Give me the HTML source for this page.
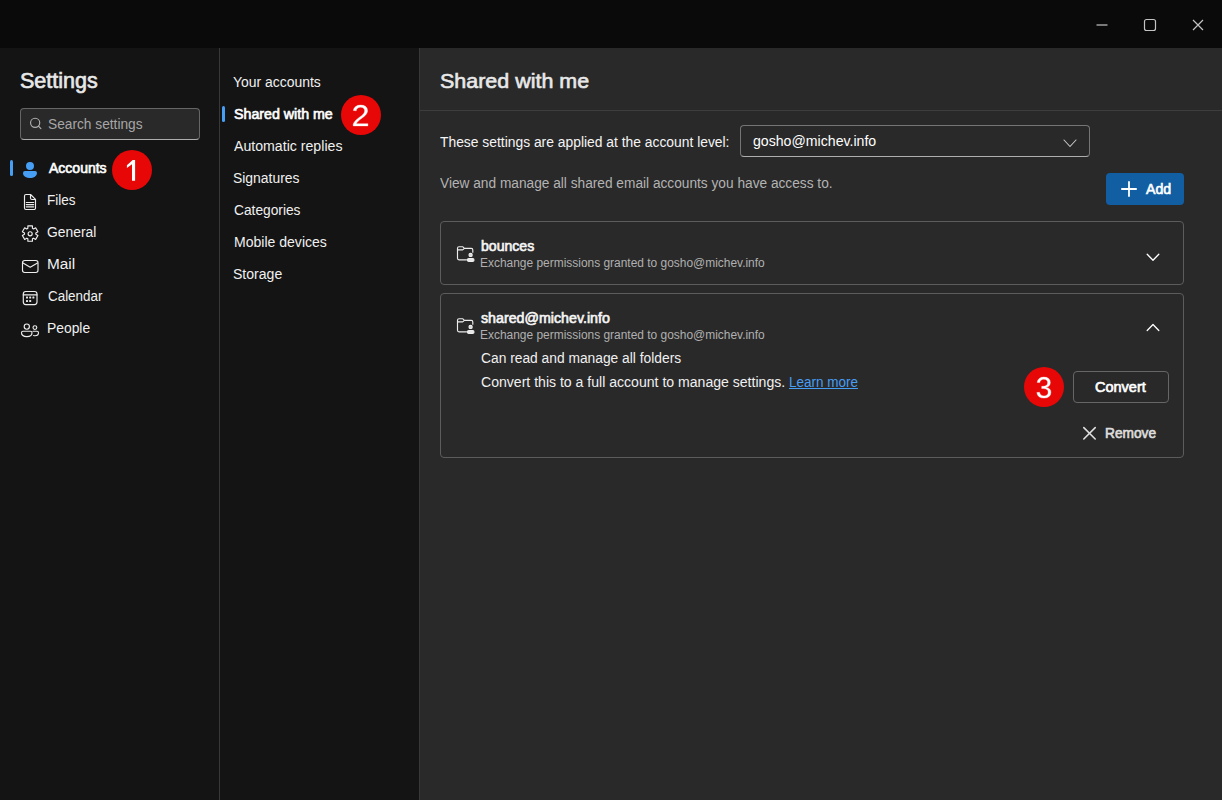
<!DOCTYPE html>
<html lang="en"><head><meta charset="utf-8"><title>Settings - Shared with me</title>
<style>
*{box-sizing:border-box;margin:0;padding:0}
html,body{width:1222px;height:800px;overflow:hidden;background:#0a0a0a;font-family:"Liberation Sans",sans-serif;color:#fff;font-size:14px}
.abs{position:absolute}
#titlebar{left:0;top:0;width:1222px;height:48px;background:#0a0a0a}
#left{left:0;top:48px;width:219px;height:752px;background:#141414}
#mid{left:220px;top:48px;width:199px;height:752px;background:#141414}
#sep1{left:219px;top:48px;width:1px;height:752px;background:#383838}
#sep2{left:419px;top:48px;width:1px;height:752px;background:#383838}
#main{left:420px;top:48px;width:802px;height:752px;background:#292929}
.t{position:absolute;white-space:nowrap;transform-origin:0 0}
.b{-webkit-text-stroke:.045em currentColor}
.b2{-webkit-text-stroke:.03em currentColor}
.badge{position:absolute;width:40px;height:40px;border-radius:50%;background:#e80707;color:transparent;font-size:1px;line-height:1px;overflow:hidden}
.dg{position:absolute;color:#fff;font-size:28px;line-height:28px;white-space:nowrap}
svg{position:absolute;overflow:visible}
.ic{fill:none;stroke:#ededed;stroke-width:1.150;stroke-linecap:round;stroke-linejoin:round}
</style></head><body>
<div class="abs" id="titlebar"></div>
<svg style="left:1090px;top:14px" width="120" height="22" viewBox="0 0 120 22" fill="none" stroke="#c4c4c4" stroke-width="1.200">
<path d="M6.500 11h11"/>
<rect x="54.500" y="5.500" width="11" height="11" rx="2"/>
<path d="M103 6l10 10M113 6l-10 10"/>
</svg>
<div class="abs" id="left"></div>
<div class="abs" id="mid"></div>
<div class="abs" id="sep1"></div>
<div class="abs" id="sep2"></div>
<div class="abs" id="main"></div>

<!-- search -->
<div class="abs" style="left:20px;top:108px;width:180px;height:32px;background:#292929;border:1px solid #666;border-bottom-color:#adadad;border-radius:4px"></div>
<svg style="left:28px;top:116px" width="16" height="16" viewBox="0 0 16 16" fill="none" stroke="#b0b0b0" stroke-width="1.150" stroke-linecap="round"><circle cx="7.150" cy="6.800" r="4.600"/><path d="M10.500 10.100L12.900 12.600"/></svg>

<!-- nav indicator + icons -->
<div class="abs" style="left:10px;top:160px;width:3px;height:16px;border-radius:1.500px;background:#479ef5"></div>
<svg style="left:20px;top:160px" width="20" height="20" viewBox="0 0 20 20"><path fill="#479ef5" d="M10 2a4 4 0 1 0 0 8 4 4 0 0 0 0-8ZM5.010 11A2 2 0 0 0 3 13c0 1.690.830 2.970 2.130 3.800A9.140 9.140 0 0 0 10 18c1.850 0 3.580-.39 4.870-1.200A4.350 4.350 0 0 0 17 13a2 2 0 0 0-2-2H5Z"/></svg>
<svg class="ic" style="left:20px;top:192px" width="20" height="20" viewBox="0 0 20 20"><path d="M6 2.500h4.600L15.500 7.400V16a1.500 1.500 0 0 1-1.500 1.500H6A1.500 1.500 0 0 1 4.500 16V4A1.500 1.500 0 0 1 6 2.500ZM10.500 2.700V6a1.500 1.500 0 0 0 1.500 1.500h3.300M6.300 10.500h7.400M6.300 12.600h7.400M6.300 14.800h7.400"/></svg>
<svg class="ic" style="left:20px;top:224px" width="20" height="20" viewBox="0 0 20 20"><path d="M7.88 4.37 L7.86 1.93 L12.44 1.93 L12.42 4.37 L13.54 5.02 L15.65 3.79 L17.93 7.75 L15.81 8.95 L15.81 10.25 L17.93 11.45 L15.65 15.41 L13.54 14.18 L12.42 14.83 L12.44 17.27 L7.86 17.27 L7.88 14.83 L6.76 14.18 L4.65 15.41 L2.37 11.45 L4.49 10.25 L4.49 8.95 L2.37 7.75 L4.65 3.79 L6.76 5.02Z"/><circle cx="10.15" cy="9.799999999999999" r="2.050"/></svg>
<svg class="ic" style="left:20px;top:256px" width="20" height="20" viewBox="0 0 20 20"><rect x="2.500" y="4.500" width="15.500" height="12" rx="2.200"/><path d="M3 7l7.200 4.200L17.500 7"/></svg>
<svg class="ic" style="left:20px;top:288px" width="20" height="20" viewBox="0 0 20 20"><rect x="3.300" y="3.500" width="13.700" height="13.100" rx="2.500"/><path d="M3.300 6.900h13.700"/><g fill="#e6e6e6" stroke="none"><rect x="6" y="8.600" width="2" height="2" rx=".5"/><rect x="9.200" y="8.600" width="2" height="2" rx=".5"/><rect x="12.400" y="8.600" width="2" height="2" rx=".5"/><rect x="6" y="12" width="2" height="2" rx=".5"/><rect x="9.200" y="12" width="2" height="2" rx=".5"/></g></svg>
<svg class="ic" style="left:20px;top:320px" width="20" height="20" viewBox="0 0 20 20"><circle cx="6.800" cy="6.600" r="2.600"/><circle cx="14.900" cy="7.600" r="1.900"/><path d="M3 11.200h7.500a1.500 1.500 0 0 1 1.500 1.500c0 2.400-2 3.900-5.200 3.900S1.500 15.100 1.500 12.700a1.500 1.500 0 0 1 1.500-1.500ZM13 11.200h4a1.500 1.500 0 0 1 1.500 1.500c0 1.800-1.300 3-3.500 3-.5 0-1-.1-1.400-.2"/></svg>
<div class="badge" style="left:112px;top:150px">1</div>
<svg style="left:0;top:0" width="1" height="1"><path fill="#fff" d="M135.100 160.100V180.800H132.000V164.300L126.900 168.000V165.300L132.700 160.100Z"/></svg>

<!-- mid -->
<div class="abs" style="left:222px;top:106px;width:3px;height:16px;border-radius:1.500px;background:#479ef5"></div>
<div class="badge" style="left:341px;top:95px">2</div>
<svg style="left:0;top:0" width="1" height="1"><path fill="#fff" stroke="#fff" stroke-width=".35" d="M353.20 125.90V124.05Q354.00 122.35 355.16 121.05Q356.32 119.75 357.60 118.69Q358.87 117.64 360.12 116.74Q361.38 115.83 362.39 114.93Q363.39 114.03 364.02 113.04Q364.64 112.05 364.64 110.80Q364.64 109.11 363.57 108.18Q362.50 107.25 360.59 107.25Q358.78 107.25 357.60 108.16Q356.43 109.07 356.23 110.71L353.33 110.47Q353.64 108.01 355.59 106.55Q357.53 105.10 360.59 105.10Q363.95 105.10 365.75 106.56Q367.55 108.02 367.55 110.71Q367.55 111.91 366.96 113.09Q366.37 114.26 365.21 115.44Q364.04 116.62 360.75 119.09Q358.94 120.46 357.86 121.56Q356.79 122.66 356.32 123.67H367.90V125.90Z"/></svg>

<!-- main -->
<div class="abs" style="left:420px;top:110px;width:802px;height:1px;background:#3d3d3d"></div>
<div class="abs" style="left:740px;top:125px;width:350px;height:32px;background:#292929;border:1px solid #757575;border-bottom-color:#adadad;border-radius:4px"></div>
<svg style="left:1063px;top:139px" width="14" height="9" viewBox="0 0 14 9" fill="none" stroke="#c8c8c8" stroke-width="1.100" stroke-linecap="round" stroke-linejoin="round"><path d="M1 1l6 6.500 6-6.500"/></svg>
<div class="abs" style="left:1106px;top:173px;width:78px;height:32px;background:#115ea3;border-radius:4px"></div>
<svg style="left:1120.800px;top:181px" width="16" height="16" viewBox="0 0 16 16" fill="none" stroke="#fff" stroke-width="1.800" stroke-linecap="round"><path d="M8 .9v14.200M.9 8h14.200"/></svg>

<div class="abs" style="left:440px;top:221px;width:744px;height:64px;border:1px solid #5c5c5c;border-radius:4px"></div>
<svg class="ic" style="left:455px;top:243px" width="20" height="20" viewBox="0 0 20 20"><path d="M11.500 16.800H4a1.500 1.500 0 0 1-1.500-1.500V5.200A1.500 1.500 0 0 1 4 3.700h3.600l1.800 1.700H16.300a1.500 1.500 0 0 1 1.500 1.500v2.300M2.500 6.900h5.200l1.700-1.500"/><circle cx="15.600" cy="11.900" r="1.600" fill="#d8d8d8"/><rect x="12.400" y="15.500" width="6.600" height="2.800" rx="1.400" fill="#e6e6e6"/></svg>
<svg style="left:1146px;top:252.500px" width="14" height="9" viewBox="0 0 14 9" fill="none" stroke="#fff" stroke-width="1.300" stroke-linecap="round" stroke-linejoin="round"><path d="M1.200 1.200l5.800 6 5.800-6"/></svg>

<div class="abs" style="left:440px;top:293px;width:744px;height:165px;border:1px solid #5c5c5c;border-radius:4px"></div>
<svg class="ic" style="left:455px;top:315px" width="20" height="20" viewBox="0 0 20 20"><path d="M11.500 16.800H4a1.500 1.500 0 0 1-1.500-1.500V5.200A1.500 1.500 0 0 1 4 3.700h3.600l1.800 1.700H16.300a1.500 1.500 0 0 1 1.500 1.500v2.300M2.500 6.900h5.200l1.700-1.500"/><circle cx="15.600" cy="11.900" r="1.600" fill="#d8d8d8"/><rect x="12.400" y="15.500" width="6.600" height="2.800" rx="1.400" fill="#e6e6e6"/></svg>
<svg style="left:1146px;top:323px" width="14" height="9" viewBox="0 0 14 9" fill="none" stroke="#fff" stroke-width="1.300" stroke-linecap="round" stroke-linejoin="round"><path d="M1.200 7.500l5.800-6 5.800 6"/></svg>
<div class="badge" style="left:1024px;top:367px">3</div>
<svg style="left:0;top:0" width="1" height="1"><path fill="#fff" stroke="#fff" stroke-width=".35" d="M1050.90 392.18Q1050.90 395.00 1049.10 396.55Q1047.30 398.10 1043.96 398.10Q1040.85 398.10 1039.00 396.70Q1037.15 395.30 1036.80 392.57L1039.50 392.32Q1040.02 395.94 1043.96 395.94Q1045.93 395.94 1047.06 394.97Q1048.18 394.00 1048.18 392.09Q1048.18 390.42 1046.90 389.49Q1045.61 388.56 1043.19 388.56H1041.71V386.30H1043.13Q1045.28 386.30 1046.46 385.36Q1047.65 384.43 1047.65 382.78Q1047.65 381.14 1046.68 380.19Q1045.72 379.24 1043.81 379.24Q1042.09 379.24 1041.02 380.13Q1039.95 381.01 1039.78 382.62L1037.15 382.42Q1037.44 379.91 1039.23 378.50Q1041.03 377.10 1043.84 377.10Q1046.92 377.10 1048.63 378.53Q1050.33 379.95 1050.33 382.50Q1050.33 384.46 1049.24 385.68Q1048.14 386.90 1046.05 387.34V387.40Q1048.34 387.64 1049.62 388.93Q1050.90 390.22 1050.90 392.18Z"/></svg>
<div class="abs" style="left:1073px;top:371px;width:96px;height:32px;border:1px solid #666;border-radius:4px"></div>
<svg style="left:1082.500px;top:426.500px" width="13" height="13" viewBox="0 0 13 13" fill="none" stroke="#dedede" stroke-width="1.600" stroke-linecap="round"><path d="M.8.600l11.400 11.400M12.200.6L.8 12"/></svg>

<div class="t b2" style="left:19.65px;top:71.10px;font-size:21.5px;line-height:21.5px;color:#e8e8e8;transform:scaleX(1.0013)">Settings</div>
<div class="t" style="left:47.70px;top:116.75px;font-size:14px;line-height:14px;color:#a6a6a6;transform:scaleX(0.9804)">Search settings</div>
<div class="t b" style="left:48.52px;top:161.15px;font-size:14px;line-height:14px;color:#ffffff;transform:scaleX(1.0006)">Accounts</div>
<div class="t" style="left:46.57px;top:193.35px;font-size:14px;line-height:14px;color:#f0f0f0;transform:scaleX(0.9651)">Files</div>
<div class="t" style="left:46.71px;top:225.35px;font-size:14px;line-height:14px;color:#f0f0f0;transform:scaleX(0.9904)">General</div>
<div class="t" style="left:46.60px;top:257.35px;font-size:14px;line-height:14px;color:#f0f0f0;transform:scaleX(1.0970)">Mail</div>
<div class="t" style="left:47.56px;top:289.35px;font-size:14px;line-height:14px;color:#f0f0f0;transform:scaleX(0.9575)">Calendar</div>
<div class="t" style="left:46.53px;top:321.35px;font-size:14px;line-height:14px;color:#f0f0f0;transform:scaleX(0.9889)">People</div>
<div class="t" style="left:232.85px;top:74.85px;font-size:14px;line-height:14px;color:#f0f0f0;transform:scaleX(0.9947)">Your accounts</div>
<div class="t b" style="left:233.56px;top:106.85px;font-size:14px;line-height:14px;color:#ffffff;transform:scaleX(1.0155)">Shared with me</div>
<div class="t" style="left:233.66px;top:138.85px;font-size:14px;line-height:14px;color:#f0f0f0;transform:scaleX(1.0100)">Automatic replies</div>
<div class="t" style="left:232.51px;top:170.85px;font-size:14px;line-height:14px;color:#f0f0f0;transform:scaleX(0.9933)">Signatures</div>
<div class="t" style="left:233.53px;top:202.85px;font-size:14px;line-height:14px;color:#f0f0f0;transform:scaleX(0.9820)">Categories</div>
<div class="t" style="left:233.60px;top:234.85px;font-size:14px;line-height:14px;color:#f0f0f0;transform:scaleX(1.0026)">Mobile devices</div>
<div class="t" style="left:232.50px;top:266.85px;font-size:14px;line-height:14px;color:#f0f0f0;transform:scaleX(1.0037)">Storage</div>
<div class="t b2" style="left:439.55px;top:70.12px;font-size:21px;line-height:21px;color:#e8e8e8;transform:scaleX(1.0221)">Shared with me</div>
<div class="t" style="left:439.73px;top:135.25px;font-size:14px;line-height:14px;color:#f5f5f5;transform:scaleX(0.9892)">These settings are applied at the account level:</div>
<div class="t" style="left:752.52px;top:134.15px;font-size:14px;line-height:14px;color:#ffffff;transform:scaleX(1.0087)">gosho@michev.info</div>
<div class="t" style="left:439.65px;top:176.35px;font-size:14px;line-height:14px;color:#b3b3b3;transform:scaleX(0.9782)">View and manage all shared email accounts you have access to.</div>
<div class="t b" style="left:1145.67px;top:182.05px;font-size:14px;line-height:14px;color:#ffffff;transform:scaleX(1.0095)">Add</div>
<div class="t b" style="left:480.53px;top:239.05px;font-size:14px;line-height:14px;color:#f5f5f5;transform:scaleX(1.0057)">bounces</div>
<div class="t" style="left:479.52px;top:257.04px;font-size:12px;line-height:12px;color:#b0b0b0;transform:scaleX(0.9951)">Exchange permissions granted to gosho@michev.info</div>
<div class="t b" style="left:480.72px;top:311.05px;font-size:14px;line-height:14px;color:#f5f5f5;transform:scaleX(1.0165)">shared@michev.info</div>
<div class="t" style="left:479.52px;top:328.54px;font-size:12px;line-height:12px;color:#b0b0b0;transform:scaleX(0.9951)">Exchange permissions granted to gosho@michev.info</div>
<div class="t" style="left:480.57px;top:351.05px;font-size:14px;line-height:14px;color:#f0f0f0;transform:scaleX(0.9854)">Can read and manage all folders</div>
<div class="t" style="left:480.54px;top:374.95px;font-size:14px;line-height:14px;color:#f0f0f0;transform:scaleX(1.0047)">Convert this to a full account to manage settings.</div>
<div class="t" style="left:788.50px;top:374.95px;font-size:14px;line-height:14px;color:#479ef5;transform:scaleX(0.9635)"><u>Learn more</u></div>
<div class="t b" style="left:1094.50px;top:380.15px;font-size:14px;line-height:14px;color:#ffffff;transform:scaleX(1.0359)">Convert</div>
<div class="t b" style="left:1104.59px;top:426.05px;font-size:14px;line-height:14px;color:#dedede;transform:scaleX(0.9802)">Remove</div>
</body></html>
